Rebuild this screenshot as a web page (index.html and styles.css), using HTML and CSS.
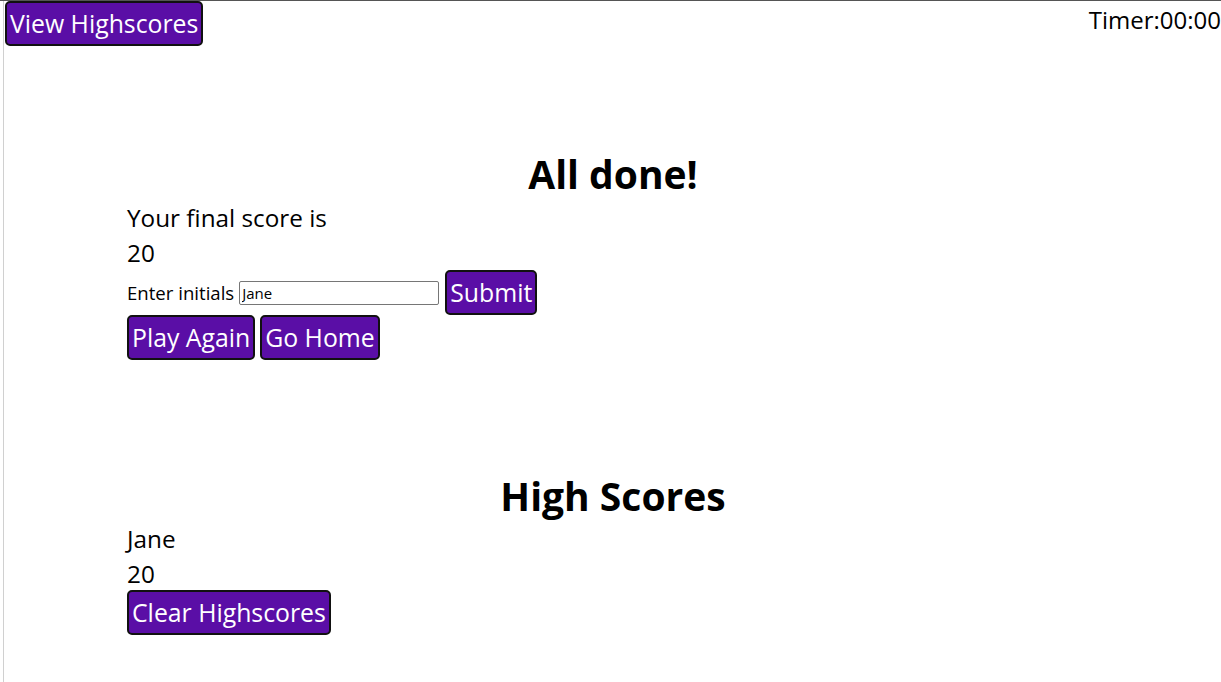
FILE: index.html
```html
<!DOCTYPE html>
<html lang="en">
<head>
<meta charset="utf-8">
<title>Quiz</title>
<link rel="stylesheet" href="styles.css">
</head>
<body>
<div class="frame">
  <header class="topbar">
    <button class="btn">View Highscores</button>
    <div class="timer">Timer:00:00</div>
  </header>
  <main class="main">
    <section class="done">
      <h1 class="title">All done!</h1>
      <div class="line">Your final score is</div>
      <div class="line">20</div>
      <form class="initials">
        <label class="label" for="ini">Enter initials</label>
        <input class="input" id="ini" type="text" value="Jane">
        <button class="btn" type="button">Submit</button>
      </form>
      <div class="actions">
        <button class="btn" type="button">Play Again</button>
        <button class="btn" type="button">Go Home</button>
      </div>
    </section>
    <section class="scores">
      <h1 class="title">High Scores</h1>
      <div class="line">Jane</div>
      <div class="line">20</div>
      <button class="btn" type="button">Clear Highscores</button>
    </section>
  </main>
</div>
</body>
</html>
```
FILE: styles.css
```css
html, body {
  margin: 0;
  padding: 0;
  background: #fff;
}
body {
  border-top: 1px solid #555;
  font-family: "Open Sans", "Noto Sans", sans-serif;
  color: #000;
  height: 681px;
  overflow: hidden;
}
.frame {
  margin-left: 3px;
  border-left: 1px solid #d0d0d0;
  height: 100%;
}
.topbar {
  display: flex;
  justify-content: space-between;
  align-items: flex-start;
  padding-left: 1px;
}
.btn {
  font-family: inherit;
  font-size: 24.8px;
  line-height: 33px;
  color: #fff;
  background: #5a0ea6;
  border: 2px solid #111;
  border-radius: 5px;
  padding: 4px 3px;
  margin: 0;
  cursor: pointer;
}
.timer {
  font-size: 24px;
  line-height: 33px;
  padding-top: 2px;
}
.main {
  margin: 0 122px 0 123px;
}
.title {
  text-align: center;
  font-size: 39px;
  font-weight: 700;
  line-height: 44px;
  margin: 106px 0 4px;
}
.line {
  font-size: 24.3px;
  line-height: 35px;
}
.initials {
  display: flex;
  align-items: center;
  gap: 5px;
  margin: 0;
}
.label {
  font-size: 18.6px;
}
.input {
  width: 194px;
  height: 20px;
  font-family: inherit;
  font-size: 15px;
  padding: 1px 2px;
  border: 1px solid #767676;
  border-radius: 2px;
  margin: 0 1px 0 0;
}
.actions {
  display: flex;
  gap: 5px;
}
.scores .title {
  margin: 114px 0 3px;
}
.scores .btn {
  margin-top: -1px;
}
```
